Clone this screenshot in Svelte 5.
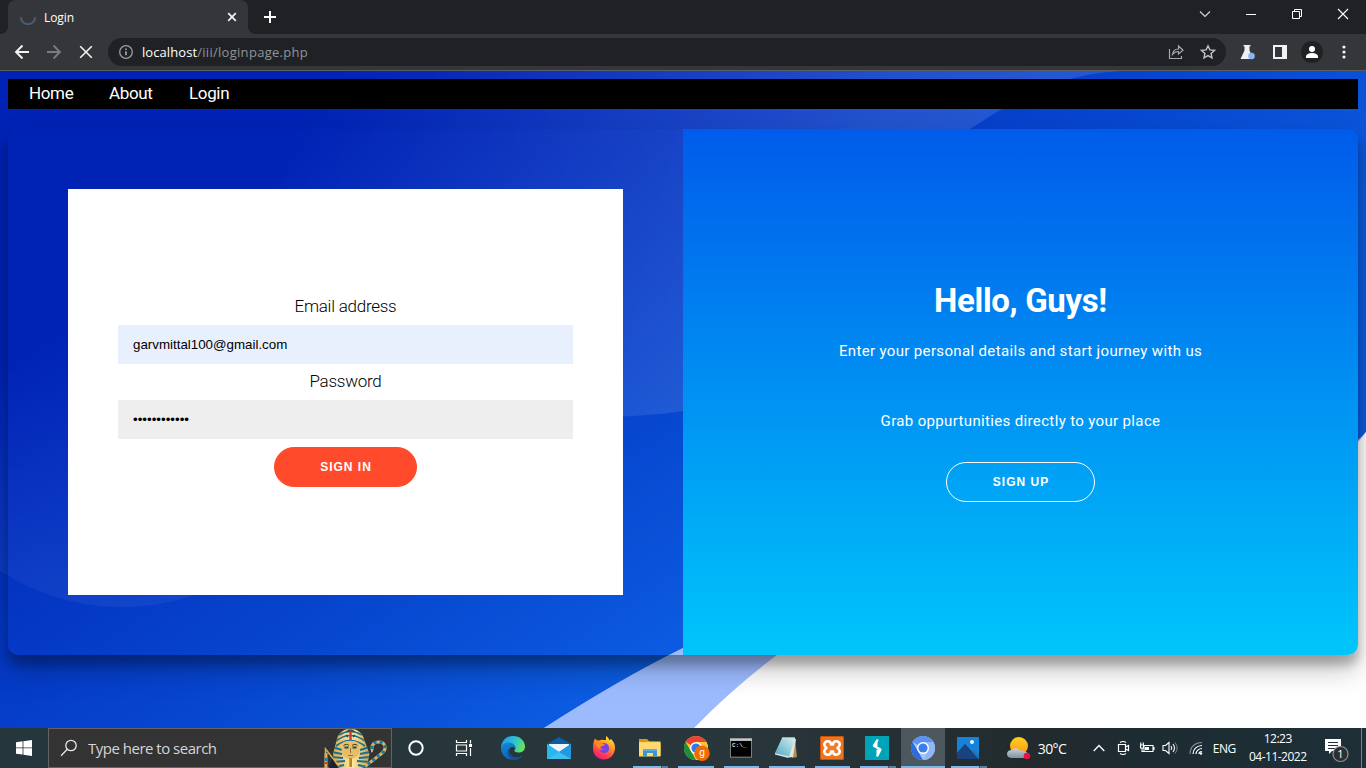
<script>
  let email = $state('garvmittal100@gmail.com');
  let password = $state('passw0rd1234');
  const links = ['Home', 'About', 'Login'];
</script>

{#snippet edge()}
  <svg width="24" height="24" viewBox="0 0 24 24">
    <defs>
      <linearGradient id="eg1" x1="0" y1="0.2" x2="1" y2="0.5"><stop offset="0" stop-color="#1b9de2" /><stop offset=".55" stop-color="#2bc3d8" /><stop offset="1" stop-color="#67e357" /></linearGradient>
      <linearGradient id="eg2" x1="0" y1="0" x2="0.3" y2="1"><stop offset="0" stop-color="#1389d8" /><stop offset="1" stop-color="#0f62b8" /></linearGradient>
    </defs>
    <path d="M0 11C1 4 6 0 12 0c7 0 12 5 12 10.5 0 4-3 6-6.500 6-3 0-4.500-1-4-2.500 2-1.500 1-6-4-6C5 8 1 9 0 13z" fill="url(#eg1)" />
    <path d="M0 12c1-4 5-6 9-5.500 4 .5 5.500 3.500 5 6-1-1.500-3.500-2-5-.5-2.500 3 0 9 6 9.500 2.500 0 5-.8 7-2.500C20 22 16.500 24 12.500 24 5.500 24 0 19 0 12z" fill="url(#eg2)" />
    <path d="M8.500 12c-1.500 5 1.500 9 6.500 9.500 2.500 0 5-.8 7-2.500-2 3-5.500 5-9.500 5C7 22 4.500 17 8.500 12z" fill="#144f91" />
  </svg>
{/snippet}

{#snippet mail()}
  <svg width="24" height="24" viewBox="0 0 24 24">
    <path d="M0 8 12 1l12 7v4H0z" fill="#0b5da8" /><path d="M2 8h20v8H2z" fill="#f2f5f7" />
    <path d="m0 8 12 8 12-8v15H0z" fill="#2aa9ea" /><path d="M0 8v15l12-7z" fill="#26b7ee" /><path d="m24 8-12 8L0 23h24z" fill="#42bdf3" /><path d="m12 16 12 7V8z" fill="#2397df" />
  </svg>
{/snippet}

{#snippet firefox()}
  <svg width="24" height="24" viewBox="0 0 24 24">
    <defs><linearGradient id="ff" x1=".8" y1="0" x2=".3" y2="1"><stop offset="0" stop-color="#fff145" /><stop offset=".4" stop-color="#ff9425" /><stop offset=".75" stop-color="#ff3d4d" /><stop offset="1" stop-color="#e91882" /></linearGradient></defs>
    <path d="M3 2.500C4 4 5.500 4.500 7 4.500c2-1 3.500-1 4.500-.5L14 4V0c2 1 3 2.800 3.400 4.300L19 3c3 3 4.300 6 4 9.500C22.500 19 18 23.500 12 23.500S1 19 1 12.500C1 8 1.500 5 3 2.500z" fill="url(#ff)" />
    <path d="M7 9c2-2 6-3 8-1 2.500 2 3 6 .5 8-2.500 2-7 1-8-2 2 .5 3.500 0 4-1-2 0-3.500-1-3-2.500z" fill="#7542e4" /><path d="M2.500 6 8 5l2 2.500 3 .5-2 2c-2 0-3.500 1-3 3-2-1-3.500-3-5.500-7z" fill="#ff8a24" />
  </svg>
{/snippet}

{#snippet explorer()}
  <svg width="24" height="24" viewBox="0 0 24 24">
    <path d="M1 3.500h8l2 2h11.500v15H1z" fill="#ffd35c" /><path d="M1 3h8l1.500 2L9 6H1z" fill="#d69a12" /><path d="M1 7h21.500v13H1z" fill="#ffda70" />
    <path d="M5 13h14v7.500h-4V17H9v3.500H5z" fill="#3d95d8" /><path d="M5 13h14v2H5z" fill="#57ace9" />
  </svg>
{/snippet}

{#snippet chrome()}
  <svg width="26" height="26" viewBox="0 0 26 26">
    <circle cx="12" cy="13" r="12" fill="#fcc934" />
    <g transform="translate(0 1)"><path d="M12 12 1.600 6A12 12 0 0 1 22.400 6z" fill="#ea4335" /><path d="M1.600 6 6.800 15 12 24A12 12 0 0 1 1.600 6z" fill="#1e8e3e" /><path d="M12 6h10.400A12 12 0 0 1 12 24l5.200-9z" fill="#fcc934" />
    <circle cx="12" cy="12" r="6" fill="#fff" /><circle cx="12" cy="12" r="4.600" fill="#2f7bea" /></g>
    <circle cx="18" cy="18.200" r="7.700" fill="#ef6c00" /><text x="18" y="21" text-anchor="middle" font-family="Roboto" font-size="10" fill="#fff">g</text>
  </svg>
{/snippet}

{#snippet cmd()}
  <svg width="24" height="24" viewBox="0 0 24 24">
    <path d="M1 2.500h22v19H1z" fill="#9c9c9c" /><path d="M1.800 5h20.400v15.700H1.800z" fill="#000" /><path d="M1 2.500h22v2H1z" fill="#c9c9c9" />
    <text x="3" y="11" font-family="Liberation Mono" font-size="6" font-weight="700" fill="#ddd">C:\_</text>
  </svg>
{/snippet}

{#snippet notepad()}
  <svg width="24" height="24" viewBox="0 0 24 24">
    <defs><linearGradient id="np" x1="1" y1="0" x2="0" y2="1"><stop offset="0" stop-color="#d2f0f5" /><stop offset="1" stop-color="#4fa6bd" /></linearGradient></defs>
    <path d="m21 3 2 18-5 1z" fill="#a8905a" /><path d="m8 2 14 1-3 18-4 .5z" fill="#e6e4da" /><path d="M8 2h13l-6 19L1 17z" fill="url(#np)" /><path d="M8 1.800h13" stroke="#d7d7d7" /><path d="m1 17 14 3.500-.5 1.500L1 18.500z" fill="#d5ecef" />
  </svg>
{/snippet}

{#snippet xampp()}
  <svg width="24" height="24" viewBox="0 0 24 24">
    <rect width="24" height="24" rx="2" fill="#ee7420" /><rect x=".5" y=".5" width="23" height="23" rx="2" fill="none" stroke="#c95308" />
    <path d="M8 5.300c2 0 3 1.200 3 3.200h2c0-2 1-3.200 3-3.200 2.500 0 3.700 1.500 3.700 3.200S19 11 17.500 12c1.500 1 2.200 2 2.200 3.500s-1.200 3.200-3.700 3.200c-2 0-3-1.200-3-3.200h-2c0 2-1 3.200-3 3.200-2.500 0-3.700-1.500-3.700-3.200S5 13 6.500 12C5 11 4.300 10 4.300 8.500S5.500 5.300 8 5.300z" fill="#f07b2a" stroke="#fff" stroke-width="2.600" stroke-linejoin="round" />
  </svg>
{/snippet}

{#snippet burp()}
  <svg width="24" height="24" viewBox="0 0 24 24"><path d="M0 0h24v24H0z" fill="#00a4b8" /><path d="M12.800 3.500 8.700 9.800 15.600 13.400 12 20.500" fill="none" stroke="#fff" stroke-width="2.200" stroke-linejoin="bevel" /><path d="M8 10h4.500V4.500zM16 13.500h-4.500V20z" fill="#fff" /></svg>
{/snippet}

{#snippet chromium()}
  <svg width="24" height="24" viewBox="0 0 24 24">
    <circle cx="12" cy="12" r="12" fill="#a8c5fa" /><path d="M12 12 1.600 6A12 12 0 0 1 22.400 6z" fill="#5b92f2" /><path d="M1.600 6 6.800 15 12 24A12 12 0 0 1 1.600 6z" fill="#2c6be0" /><path d="M12 6h10.400A12 12 0 0 1 12 24l5.200-9z" fill="#91b6f8" />
    <circle cx="12" cy="12" r="6" fill="#fff" /><circle cx="12" cy="12" r="4.600" fill="#3c7eee" />
  </svg>
{/snippet}

{#snippet photos()}
  <svg width="24" height="24" viewBox="0 0 24 24"><path d="M1 1h22v22H1z" fill="#1683d8" /><path d="M1 17 9 8l14 15H1z" fill="#174f93" /><path d="m10 23 8-9 5 5v4z" fill="#2273b8" /><path d="m1 17 8-9 13.500 15H1z" fill="#18437f" /><circle cx="16" cy="6" r="2" fill="#e8f6ff" /></svg>
{/snippet}

<div class="screen">
  <header class="tabs">
    <svg class="tab-shape" width="264" height="34" viewBox="0 0 264 34"><path d="M0 34c5 0 8-3 8-8V8c0-5 3-8 8-8h224c5 0 8 3 8 8v18c0 5 3 8 8 8z" fill="#35363a" /></svg>
    <div class="tab">
      <svg width="16" height="16" viewBox="0 0 16 16"><path d="M.8 8a7.200 7.200 0 0 0 14.400 0" fill="none" stroke="#4d5a78" stroke-width="1.900" /></svg>
      <span class="tab-title">Login</span>
      <svg class="tab-x" width="10" height="10" viewBox="0 0 10 10"><path d="m1.200 1.200 7.600 7.600M8.800 1.200 1.200 8.800" stroke="#f1f3f4" stroke-width="1.700" /></svg>
    </div>
    <svg class="plus" width="12" height="12" viewBox="0 0 12 12"><path d="M6 0v12M0 6h12" stroke="#fff" stroke-width="2" /></svg>
    <div class="win">
      <svg width="46" height="28" viewBox="0 0 46 28"><path d="m18 11.500 5 5 5-5" fill="none" stroke="#d8d8d8" stroke-width="1.100" /></svg>
      <svg width="46" height="28" viewBox="0 0 46 28"><path d="M18 14.500h10" stroke="#fff" /></svg>
      <svg width="46" height="28" viewBox="0 0 46 28"><path d="M18.500 11.500h7v7h-7zM20.500 11.500v-2h7v7h-2" fill="none" stroke="#fff" /></svg>
      <svg width="46" height="28" viewBox="0 0 46 28"><path d="m18 9 10 10m0-10L18 19" stroke="#fff" stroke-width="1.100" /></svg>
    </div>
  </header>

  <div class="toolbar">
    <svg width="16" height="16" viewBox="0 0 16 16"><path d="M15 8H2m6.500-6.500L2 8l6.500 6.500" fill="none" stroke="#f1f3f4" stroke-width="1.900" /></svg>
    <svg width="16" height="16" viewBox="0 0 16 16"><path d="M1 8h13M7.500 1.500 14 8l-6.500 6.500" fill="none" stroke="#7b7c7f" stroke-width="1.800" /></svg>
    <svg width="16" height="16" viewBox="0 0 16 16"><path d="m2.200 2.200 11.600 11.600m0-11.600L2.200 13.800" stroke="#f1f3f4" stroke-width="1.600" /></svg>
    <div class="omnibox">
      <svg width="16" height="16" viewBox="0 0 16 16"><circle cx="8" cy="8" r="6.300" fill="none" stroke="#9aa0a6" stroke-width="1.300" /><path d="M8 7.200v4M8 4.400v1.600" stroke="#b0b4b8" stroke-width="1.500" /></svg>
      <span class="url"><b>localhost</b>/iii/loginpage.php</span>
      <svg class="share" width="16" height="16" viewBox="0 0 16 16"><path d="M1.500 5v9.500h12V12" fill="none" stroke="#a5a8ac" stroke-width="1.200" /><path d="M4.500 10.500c.5-4 2.500-5.500 6-5.500V2l4.500 4.200L10.500 10V7.500c-3 0-4.500 1-6 3z" fill="none" stroke="#a5a8ac" stroke-width="1.200" /></svg>
      <svg width="16" height="16" viewBox="0 0 16 16"><path d="m8 1.800 1.900 4.100 4.500.5-3.300 3 .9 4.400L8 11.600l-4 2.200.9-4.400-3.300-3 4.500-.5z" fill="none" stroke="#c1c4c7" stroke-width="1.400" /></svg>
    </div>
    <svg class="flask" width="16" height="16" viewBox="0 0 16 16"><path d="M3.500 1h7v1.300h-1V6.500l4 8.500H.5l4-8.500V2.300h-1z" fill="#eef0f3" /><circle cx="11.500" cy="12" r="3.300" fill="#8ab4f8" /></svg>
    <svg class="panel" width="14" height="14" viewBox="0 0 14 14"><path d="M0 0h14v14H0zM2 2v10h7V2z" fill="#f1f3f4" fill-rule="evenodd" /></svg>
    <svg class="user" width="22" height="22" viewBox="0 0 22 22"><circle cx="11" cy="11" r="11" fill="#202124" /><circle cx="11" cy="8" r="3" fill="#fff" /><path d="M5 17v-1.500c0-2.200 3-3.500 6-3.500s6 1.300 6 3.500V17z" fill="#fff" /></svg>
    <svg class="dots" width="4" height="16" viewBox="0 0 4 16" fill="#f1f3f4"><circle cx="2" cy="3" r="1.600" /><circle cx="2" cy="8" r="1.600" /><circle cx="2" cy="13" r="1.600" /></svg>
  </div>

  <main class="page">
    <svg class="bg" width="1366" height="657" viewBox="0 0 1366 657">
      <defs>
        <linearGradient id="base" gradientUnits="userSpaceOnUse" x1="0" y1="279" x2="332" y2="788"><stop offset="0" stop-color="#0022b5" /><stop offset=".6" stop-color="#0642cc" /><stop offset="1" stop-color="#0b5adf" /></linearGradient>
        <linearGradient id="blob" gradientUnits="userSpaceOnUse" x1="260" y1="80" x2="800" y2="270"><stop offset="0" stop-color="#fff" stop-opacity="0" /><stop offset="1" stop-color="#fff" stop-opacity=".12" /></linearGradient>
        <linearGradient id="small" x1="0" y1="0" x2="0" y2="1"><stop offset=".4" stop-color="#fff" stop-opacity="0" /><stop offset="1" stop-color="#fff" stop-opacity=".05" /></linearGradient>
      </defs>
      <path d="M0 0h1366v657H0z" fill="#fff" />
      <path d="M544 657Q620 608 683 577C900 480 1300 440 1366 361V657z" fill="#9cbbff" />
      <path d="M0 0h1366v361C1300 440 900 480 683 577Q620 608 544 657H0z" fill="url(#base)" />
      <path d="M694 657Q735 615 777 584C1000 440 1250 520 1366 361V657z" fill="#fff" />
      <path d="M150 0H1130C1075 0 1030 18 970 58C860 160 820 318 683 340C540 362 350 320 240 180z" fill="url(#blob)" />
      <ellipse cx="122" cy="330" rx="215" ry="206" fill="url(#small)" />
    </svg>
    <nav>{#each links as l}<a href="#top">{l}</a>{/each}</nav>
    <section class="card">
      <div class="left">
        <form onsubmit={(e) => e.preventDefault()}>
          <label class="l1" for="em">Email address</label>
          <input id="em" class="auto" type="email" bind:value={email} />
          <label class="l2" for="pw">Password</label>
          <input id="pw" type="password" bind:value={password} />
          <button class="signin">SIGN IN</button>
        </form>
      </div>
      <div class="right">
        <h1>Hello, Guys!</h1>
        <p class="p1">Enter your personal details and start journey with us</p>
        <p class="p2">Grab oppurtunities directly to your place</p>
        <button class="signup">SIGN UP</button>
      </div>
    </section>
  </main>

  <footer>
    <div class="start"><svg width="16" height="16" viewBox="0 0 16 16" fill="#fff"><path d="M0 2.300 6.600 1.300v6.200H0zM7.400 1.200 16 0v7.500H7.400zM0 8.300h6.600v6.300L0 13.700zM7.400 8.300H16V16l-8.600-1.200z" /></svg></div>
    <div class="search">
      <svg width="18" height="18" viewBox="0 0 18 18"><circle cx="11" cy="6.500" r="5.200" fill="none" stroke="#e8e8e8" stroke-width="1.300" /><path d="M7.300 10.300 1 16.700" stroke="#e8e8e8" stroke-width="1.300" /></svg>
      <span>Type here to search</span>
      <svg class="pharaoh" width="66" height="39" viewBox="0 0 66 39">
        <defs>
          <linearGradient id="gold"><stop offset="0" stop-color="#d9a741" /><stop offset=".5" stop-color="#ffe9a0" /><stop offset="1" stop-color="#cf9731" /></linearGradient>
          <clipPath id="hood"><path d="M13 10C15 3 20 0 26.500 0S38 3 40 10l5.500 15-2 10-5 4H16l-5-5-2-9z" /></clipPath>
        </defs>
        <g clip-path="url(#hood)">
          <path d="M8 0h40v39H8z" fill="url(#gold)" />
          <path d="M12 12q14-11 29 0M12 17q14-11 29 0M15 6q11-7 23 0" fill="none" stroke="#176e96" stroke-width="1.700" />
          <path d="m8 18 10 3m-10 2 10 2m-10 3 11 1m-11 4 13-1m-10 6 9-2M46 18l-10 3m10 2-10 2m10 3-11 1m11 4-13-1m10 6-9-2" stroke="#176e96" stroke-width="1.900" />
        </g>
        <path d="M18.500 14c3-3 13-3 16 0l1 8c-1 5-5 8-9 8s-8-3-9-8z" fill="#e6bd69" />
        <path d="M19.500 16.500c2-1.500 4-1.500 5.500 0m3 0c2-1.500 4-1.500 5.500 0" fill="none" stroke="#4b3823" />
        <path d="M20.500 18.500h4m4 0h4" stroke="#1c5263" stroke-width="1.800" /><path d="M26.500 19v5M24 26.500h5" stroke="#a86b2d" />
        <path d="M25.300 29H28v9h-2.700z" fill="#b8832f" /><path d="M26.500 3v8" stroke="#d9362b" stroke-width="2.400" /><path d="M22.500 3q4-4 8 0M22 6l2 2M31 6l-2 2" fill="none" stroke="#24475a" stroke-width="1.200" />
        <path d="m5 39 3-10 6 10" fill="#17222f" /><path d="M1.500 39V20L15 37" fill="none" stroke="#d7ac55" stroke-width="1.500" /><path d="M2 24v15" stroke="#d9a94f" stroke-width="3" /><path d="M2 29v3" stroke="#1b82ac" stroke-width="3" /><path d="M2 33v2" stroke="#c9442b" stroke-width="3" />
        <path d="M39 39 57 25C64 20 61 13 55 13c-5 0-7 2-7 6 0 2 0 3-1 3" fill="none" stroke="#d9b465" stroke-width="3" /><path d="M39 39 57 25C64 20 61 13 55 13c-5 0-7 2-7 6 0 2 0 3-1 3" fill="none" stroke="#137da2" stroke-width="3" stroke-dasharray="3 3" />
      </svg>
    </div>
    <div class="slot cortana"><svg width="18" height="18" viewBox="0 0 18 18"><circle cx="9" cy="9" r="6.700" fill="none" stroke="#fff" stroke-width="2" /></svg></div>
    <div class="slot view"><svg width="18" height="18" viewBox="0 0 18 18"><path d="M1.500 1v2.500h10V1M1.500 17v-2.500h10V17M1.500 6h10v6h-10zM15.500 1v3.500M15.500 9v8" fill="none" stroke="#fff" stroke-width="1.200" /><path d="M14 5h3v3h-3z" fill="#fff" /></svg></div>
    <div class="slot app">{@render edge()}</div>
    <div class="slot app">{@render mail()}</div>
    <div class="slot app">{@render firefox()}</div>
    <div class="slot app run multi">{@render explorer()}</div>
    <div class="slot app run badge">{@render chrome()}</div>
    <div class="slot app run">{@render cmd()}</div>
    <div class="slot app run">{@render notepad()}</div>
    <div class="slot app run">{@render xampp()}</div>
    <div class="slot app run multi">{@render burp()}</div>
    <div class="slot app run active">{@render chromium()}</div>
    <div class="slot app run multi">{@render photos()}</div>
    <div class="tray">
      <svg class="weather" width="24" height="24" viewBox="0 0 24 24"><defs><linearGradient id="sun" x2="0" y2="1"><stop offset="0" stop-color="#ffd21f" /><stop offset="1" stop-color="#ff9417" /></linearGradient><linearGradient id="cloud" x2="0" y2="1"><stop offset="0" stop-color="#c8d2da" /><stop offset="1" stop-color="#7f93a3" /></linearGradient></defs><circle cx="12" cy="10" r="9" fill="url(#sun)" /><path d="M5 22c-3 0-5-1.500-5-4s2-4 5-4c1-2 6-3 8 .5 4-.5 7 1 8 3.500s-.5 4-3 4z" fill="url(#cloud)" /><circle cx="20" cy="20" r="3.300" fill="#e81141" /></svg>
      <span class="temp">30°C</span>
      <svg class="chev" width="12" height="8" viewBox="0 0 12 8"><path d="M.7 7 6 1.500 11.300 7" fill="none" stroke="#fff" stroke-width="1.300" /></svg>
      <svg class="cam" width="14" height="16" viewBox="0 0 14 16"><path d="M1.500 4.500h7v7h-7zM8.500 7l3-1.500v5L8.500 9M3 2.500q3-2 6 0M3 13.500q3 2 6 0" fill="none" stroke="#fff" stroke-width="1.200" /></svg>
      <svg class="bat" width="16" height="14" viewBox="0 0 16 14"><path d="M5 4.500h9v6H5zM15 6v3M1 4h4M1.800 1.500V4m2.500-2.500V4M1.500 4.500v2.500h3V4.500M3 7v3.500h2" fill="none" stroke="#fff" stroke-width="1.100" /><path d="M6 6h4v3H6z" fill="#fff" /></svg>
      <svg class="vol" width="17" height="14" viewBox="0 0 17 14"><path d="M1 4.500h2.500L7 1.500v11L3.500 9.500H1z" fill="none" stroke="#fff" stroke-width="1.100" /><path d="M9 5q1.500 2 0 4M11 3q3 4 0 8" fill="none" stroke="#fff" stroke-width="1.100" /><path d="M13 1.500q4.500 5.500 0 11" fill="none" stroke="#7c858a" /></svg>
      <svg class="wifi" width="14" height="14" viewBox="0 0 14 14" fill="none"><path d="M1 13C1 6 6 1.500 13 1.500" stroke="#8c9499" stroke-width="1.200" /><path d="M4 13c0-5 4-8.500 9-8.500M7 13c0-3 3-5.500 6-5.500M10 13c0-1.500 1.500-2.500 3-2.500" stroke="#fff" stroke-width="1.200" /><circle cx="12" cy="12.500" r="1.200" fill="#fff" /></svg>
      <span class="eng">ENG</span>
      <div class="clock"><span class="time">12:23</span><span class="date">04-11-2022</span></div>
      <svg class="note" width="26" height="26" viewBox="0 0 26 26"><path d="M1 1h16v12H8l-3 3v-3H1z" fill="#fff" /><path d="M4 4.500h10M4 7.500h10M4 10.500h7" stroke="#25333b" stroke-width="1.200" /><circle cx="16.500" cy="16" r="7.500" fill="#2d2f31" stroke="#8d9295" stroke-width="1.200" /><text x="16.500" y="20" text-anchor="middle" font-family="Open Sans" font-size="11" fill="#fff">1</text></svg>
      <i class="peek"></i>
    </div>
  </footer>
</div>

<style>
  :global(body) { margin: 0; overflow: hidden; background: #fff; }
  * { box-sizing: border-box; }
  svg { display: block; flex: none; }
  .screen { width: 1366px; height: 768px; display: flex; flex-direction: column; overflow: hidden; font-family: "Open Sans", sans-serif; }
  .tabs { height: 34px; flex: none; background: #202124; display: flex; position: relative; }
  .tab-shape { position: absolute; left: 0; top: 0; }
  .tab { position: relative; width: 248px; padding: 0 11px 0 20px; display: flex; align-items: center; color: #fff; font-size: 12px; }
  .tab-title { margin-left: 8px; flex: 1; letter-spacing: -.1px; }
  .plus { margin: 11px 0 0 16px; }
  .win { margin-left: auto; display: flex; }
  .toolbar { height: 37px; flex: none; background: #35363a; border-bottom: 1px solid #5d5e61; display: flex; align-items: center; padding-left: 14px; gap: 16px; }
  .omnibox { width: 1118px; height: 28px; margin-left: -2px; border-radius: 14px; background: #202124; display: flex; align-items: center; padding: 0 10px; gap: 8px; }
  .omnibox .share { margin-left: auto; margin-right: 8px; }
  .url { color: #8f9398; font-size: 13px; letter-spacing: .29px; white-space: nowrap; }
  .url b { color: #fff; font-weight: 400; letter-spacing: .08px; }
  .flask { margin-left: -2px; }
  .panel { margin-left: 1px; }
  .user { margin-left: -2px; }
  .dots { margin-left: 3px; }

  .page { height: 657px; flex: none; position: relative; padding: 8px; font-family: Roboto, sans-serif; }
  .bg { position: absolute; left: 0; top: 0; }
  nav { position: relative; height: 30px; background: #000; display: flex; padding-left: 21px; gap: 36px; align-items: center; }
  nav a { color: #fff; text-decoration: none; font-size: 17px; letter-spacing: -.35px; line-height: 28px; height: 30px; width: 44px; white-space: nowrap; }
  .card { position: relative; margin-top: 20px; height: 526px; border-radius: 10px; display: flex; box-shadow: 0 14px 28px rgba(0, 0, 0, .25), 0 10px 10px rgba(0, 0, 0, .22); overflow: hidden; }
  .left { width: 675px; padding: 60px; }
  form { width: 555px; height: 406px; background: #fff; padding: 106px 50px 0; display: flex; flex-direction: column; align-items: center; }
  label { font-weight: 300; font-size: 17px; letter-spacing: -.25px; line-height: 22px; height: 22px; color: #000; white-space: nowrap; }
  input { width: 455px; height: 39px; margin: 8px 0; border: 0; padding: 12px 15px; background: #eee; font: 13.333px "Liberation Sans", Arial, sans-serif; color: #000; outline: 0; }
  input.auto { background: #e8f0fe; }
  .l2 { height: 20px; line-height: 18px; }
  button { font: bold 12px/16px "Liberation Sans", Arial, sans-serif; letter-spacing: 1px; color: #fff; border-radius: 20px; height: 40px; padding: 0 0 0 1px; white-space: nowrap; }
  .signin { width: 143px; flex: none; background: #ff4b2b; border: 1px solid #ff4b2b; }
  .signup { width: 149px; background: transparent; border: 1px solid #fff; margin-top: 29px; }
  .right { width: 675px; background: linear-gradient(#005bea, #00c6fb); color: #fff; display: flex; flex-direction: column; align-items: center; padding-top: 151px; }
  h1 { margin: 0; font-size: 33px; letter-spacing: -.35px; line-height: 42px; height: 40px; font-weight: 700; white-space: nowrap; }
  p { margin: 0; font-size: 15px; line-height: 24px; letter-spacing: .35px; white-space: nowrap; }
  .p1 { margin-top: 19px; }
  .p2 { margin-top: 46px; }

  footer { height: 40px; flex: none; display: flex; background: linear-gradient(90deg, #25363c 0, #29363b 55%, #222a2d 76%, #1d2c33 84%, #1e2f37); color: #fff; }
  .start { width: 48px; display: grid; place-items: center; }
  .search { width: 344px; background: #333; border: 1px solid #636363; display: flex; align-items: center; padding-left: 11px; color: #d5d5d5; font-size: 15px; position: relative; }
  .search span { margin-left: 10px; letter-spacing: -.5px; white-space: nowrap; }
  .pharaoh { position: absolute; right: 1px; top: 0; }
  .slot { display: grid; place-items: center; position: relative; flex: none; }
  .cortana { width: 48px; }
  .view { width: 46px; margin-right: 4.5px; padding-left: 1px; }
  .app { width: 45.5px; }
  .badge { padding-left: 3px; }
  .run::after { content: ""; position: absolute; left: 5.500px; right: 4.500px; bottom: 0; height: 2px; background: #76b9ed; }
  .multi::after { background: linear-gradient(90deg, #76b9ed 28px, #42586a 28px, #42586a 29px, #56809f 29px); }
  .active { width: 44px; margin: 0 .75px 0 .75px; background: #4c585e; }
  .active::after { left: 0; right: 0; }
  .tray { flex: 1; display: flex; align-items: center; font-size: 12px; padding-left: 15.750px; }
  .temp { width: 32px; margin-left: 7px; font-size: 14px; letter-spacing: -.6px; white-space: nowrap; }
  .chev { margin-left: 23px; }
  .cam { margin-left: 12px; }
  .bat { margin-left: 8px; }
  .vol { margin-left: 7px; }
  .wifi { margin-left: 10px; }
  .eng { margin-left: 10px; width: 26px; letter-spacing: -.5px; }
  .clock { width: 76px; margin-left: 1px; display: flex; flex-direction: column; align-items: center; line-height: 18px; white-space: nowrap; }
  .clock span { letter-spacing: -.5px; }
  .note { margin: 6px 0 0 8px; }
  .peek { width: 1px; height: 40px; margin-left: auto; margin-right: 4px; background: #76838a; }
</style>
